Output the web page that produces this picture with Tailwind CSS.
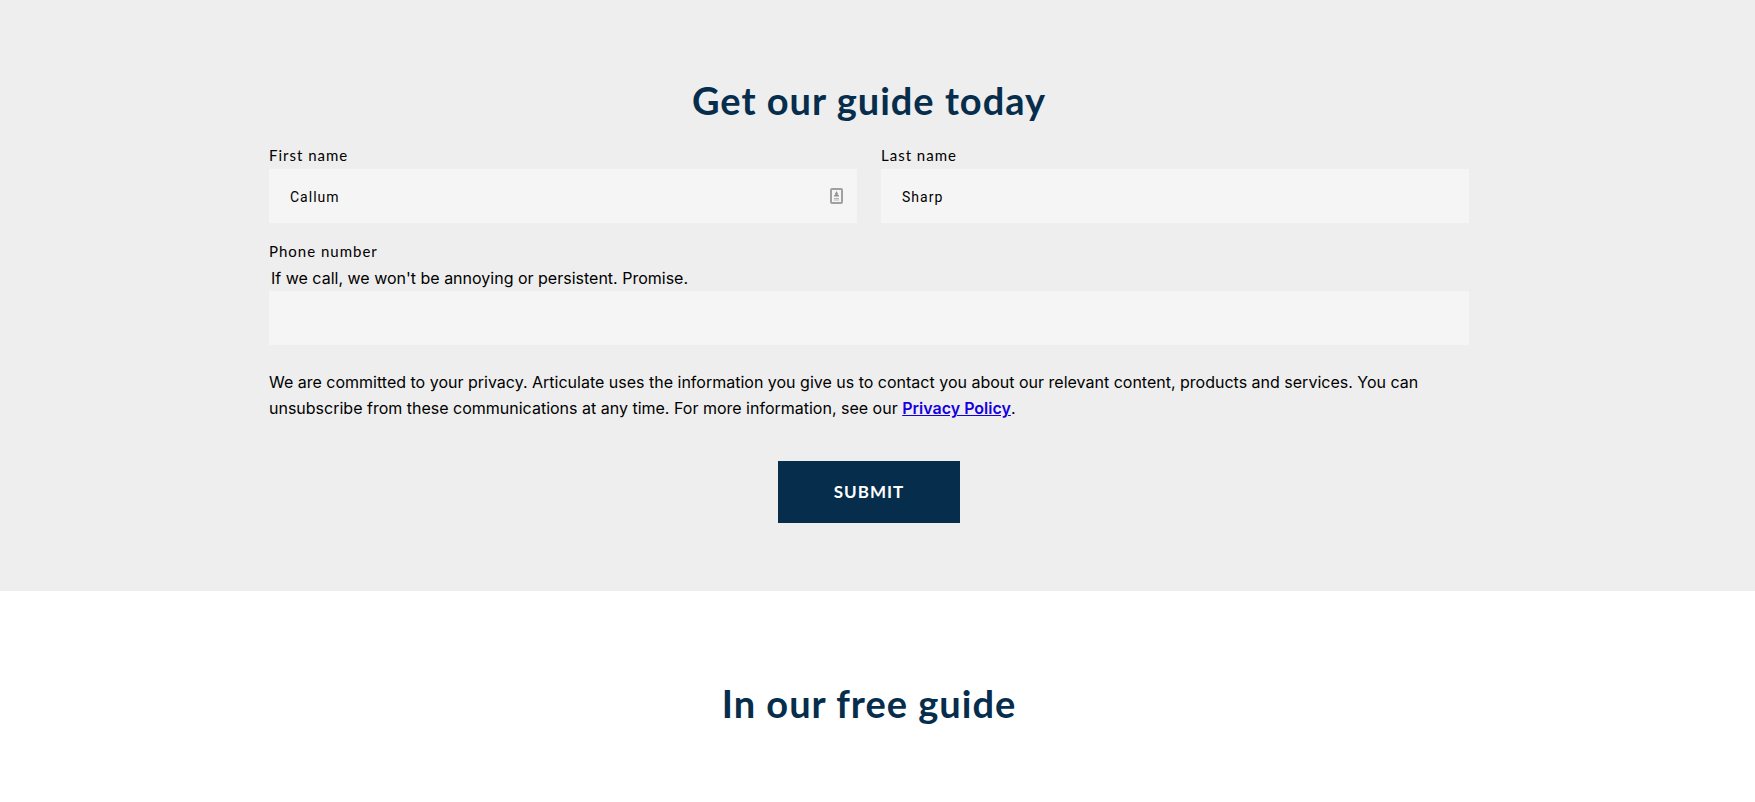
<!DOCTYPE html>
<html lang="en">
<head>
  <meta charset="UTF-8" />
  <meta name="viewport" content="width=device-width, initial-scale=1.0" />
  <title>Get our guide today</title>
  <script src="https://cdn.jsdelivr.net/npm/@tailwindcss/browser@4"></script>
</head>
<body class="bg-white text-black font-[Lato,sans-serif]">
  <!-- Guide form -->
  <section class="bg-[#eeeeee] pt-[78px] pr-[17px] pb-[68px]">
    <div class="max-w-[1200px] mx-auto">
      <h2 class="text-center text-[38px] leading-[44px] font-bold tracking-[1px] text-[#062d4c]">Get our guide today</h2>

      <form class="mt-5" onsubmit="return false">
        <div class="grid grid-cols-2 gap-6">
          <div>
            <label for="firstname" class="block text-[15px] leading-[27px] tracking-[1px]">First name</label>
            <div class="relative">
              <input id="firstname" type="text" value="Callum" class="block w-full h-[54px] pt-[2px] px-[21px] bg-[#f5f5f5] text-sm tracking-[1px] font-[Roboto,sans-serif] outline-none" />
              <svg class="absolute right-[14px] top-[19px] w-[13px] h-[16px]" viewBox="0 0 13 16" fill="none">
                <rect x="1" y="1" width="11" height="14" rx="1" stroke="#a0a0a0" stroke-width="2" />
                <path d="M6.500 3l1.500 3h-3z" fill="#8f8f8f" />
                <path d="M4 8.500c0-1.600 1-2.500 2.500-2.500s2.500.9 2.500 2.500z" fill="#8f8f8f" />
                <path d="M4 10.500h5M4 12h5" stroke="#b5b5b5" />
              </svg>
            </div>
          </div>
          <div>
            <label for="lastname" class="block text-[15px] leading-[27px] tracking-[1px]">Last name</label>
            <input id="lastname" type="text" value="Sharp" class="block w-full h-[54px] pt-[2px] px-[21px] bg-[#f5f5f5] text-sm tracking-[1px] font-[Roboto,sans-serif] outline-none" />
          </div>
        </div>

        <div class="mt-[15px]">
          <label for="phone" class="block text-[15px] leading-[27px] tracking-[1px]">Phone number</label>
          <p id="phone-help" class="pl-[2px] font-[Inter,sans-serif] text-base leading-[26px]">If we call, we won't be annoying or persistent. Promise.</p>
          <input id="phone" type="tel" aria-describedby="phone-help" class="block w-full h-[54px] px-[21px] bg-[#f5f5f5] text-sm tracking-[1px] font-[Roboto,sans-serif] outline-none" />
        </div>

        <p class="mt-6 font-[Inter,sans-serif] text-base leading-[26px]">We are committed to your privacy. Articulate uses the information you give us to contact you about our relevant content, products and services. You can unsubscribe from these communications at any time. For more information, see our <a href="#" class="font-semibold text-[#1500e0] underline">Privacy Policy</a>.</p>

        <div class="mt-10 flex justify-center">
          <button type="submit" class="h-[62px] px-14 bg-[#062d4c] text-white text-[17px] font-bold tracking-[1px]">SUBMIT</button>
        </div>
      </form>
    </div>
  </section>

  <!-- Guide contents -->
  <section class="pt-[90px] pr-[17px] pb-16">
    <h2 class="text-center text-[38px] leading-[44px] font-bold tracking-[1px] text-[#062d4c]">In our free guide</h2>
  </section>
</body>
</html>
